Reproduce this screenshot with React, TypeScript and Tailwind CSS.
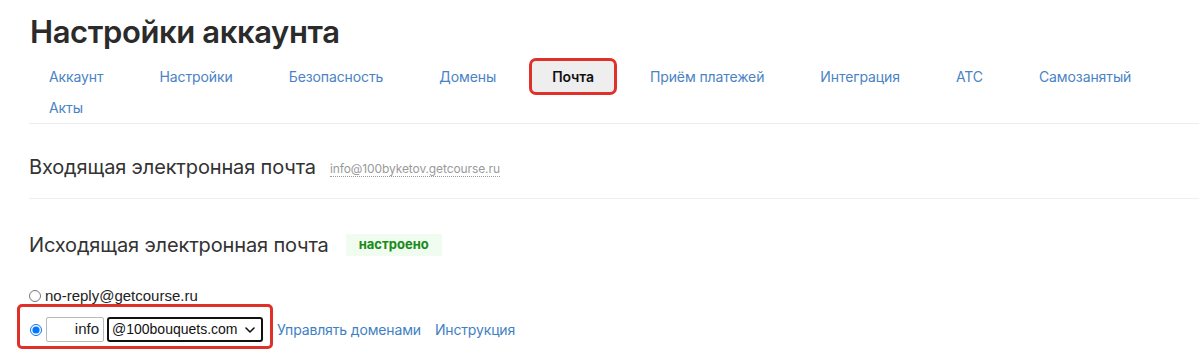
import React from "react";

const tabs = [
  "Аккаунт",
  "Настройки",
  "Безопасность",
  "Домены",
  "Почта",
  "Приём платежей",
  "Интеграция",
  "АТС",
  "Самозанятый",
  "Акты",
];

export default function App() {
  return (
    <div
      className="w-[1199px] h-[354px] overflow-hidden bg-white text-[#333] pl-[29px] pt-[12px]"
      style={{ fontFamily: "Inter, 'Noto Sans', sans-serif" }}
    >
      <h1 className="text-[31px] leading-[40px] font-semibold tracking-[-0.4px] text-[#2b2b2b] mb-[9px] pl-[1px]">
        Настройки аккаунта
      </h1>

      <nav className="flex flex-wrap gap-x-[16px] border-b border-[#ececec] pr-[40px]">
        {tabs.map((t) => {
          const active = t === "Почта";
          return (
            <span
              key={t}
              className={
                active
                  ? "h-[31px] px-[20px] flex items-center text-[14px] tracking-[-0.1px] font-semibold text-[#111] bg-[#eeeeee] rounded-[4px] ring-[3px] ring-[#e0302a]"
                  : "h-[31px] px-[20px] flex items-center text-[14px] tracking-[-0.1px] text-[#4a83c4]"
              }
            >
              {t}
            </span>
          );
        })}
      </nav>

      <section className="pt-[29px] pb-[17px] border-b border-[#efefef] flex items-center">
        <h2 className="text-[20px] leading-[28px] font-normal tracking-[-0.15px] text-[#333]">
          Входящая электронная почта
        </h2>
        <span className="ml-[14px] mt-[4px] text-[12px] leading-[15px] tracking-[-0.1px] text-[#9a9a9a] border-b border-dotted border-[#9a9a9a]">
          info@100byketov.getcourse.ru
        </span>
      </section>

      <section className="pt-[32px]">
        <div className="flex items-center">
          <h2 className="text-[20px] leading-[28px] font-normal tracking-[-0.15px] text-[#333]">
            Исходящая электронная почта
          </h2>
          <span className="ml-[17px] h-[22px] w-[96px] flex items-center justify-center bg-[#f1fcf1] text-[#188a18] text-[13px] font-bold">
            настроено
          </span>
        </div>

        <div
          className="mt-[28px] flex flex-col text-[15px]"
          style={{ fontFamily: "'Liberation Sans', Arial, sans-serif" }}
        >
          <label className="h-[18px] flex items-center gap-[4px] text-[#222]">
            <input type="radio" name="mail" className="m-0 w-[12px] h-[12px]" />
            <span className="leading-[18px]">no-reply@getcourse.ru</span>
          </label>

          <div className="flex items-center mt-[-1px]">
            <span className="-ml-[12px] inline-flex items-center border-[3px] border-[#e0302a] rounded-[5px] pl-[10px] pr-[7px] pt-[10px] pb-[4px]">
              <input
                type="radio"
                name="mail"
                defaultChecked
                className="m-0 w-[12px] h-[12px]"
              />
              <span className="ml-[4px] w-[58px] h-[25px] border border-[#b9b9b9] rounded-[2px] flex items-center justify-end pr-[4px] text-[#222]">
                info
              </span>
              <span className="ml-[3px] w-[156px] h-[25px] border-2 border-[#111] rounded-[3px] flex items-center justify-between pl-[3px] pr-[6px] text-[14px] text-[#111]">
                <span>@100bouquets.com</span>
                <svg width="10" height="6" viewBox="0 0 10 6" fill="none">
                  <path
                    d="M1 1l4 4 4-4"
                    stroke="#111"
                    strokeWidth="1.6"
                    strokeLinecap="round"
                    strokeLinejoin="round"
                  />
                </svg>
              </span>
            </span>
            <span
              className="ml-[4px] mt-[6px] text-[14px] tracking-[-0.15px] text-[#3f7fc4]"
              style={{ fontFamily: "Inter, sans-serif" }}
            >
              Управлять доменами
            </span>
            <span
              className="ml-[14px] mt-[6px] text-[14px] tracking-[-0.15px] text-[#3f7fc4]"
              style={{ fontFamily: "Inter, sans-serif" }}
            >
              Инструкция
            </span>
          </div>
        </div>
      </section>
    </div>
  );
}
